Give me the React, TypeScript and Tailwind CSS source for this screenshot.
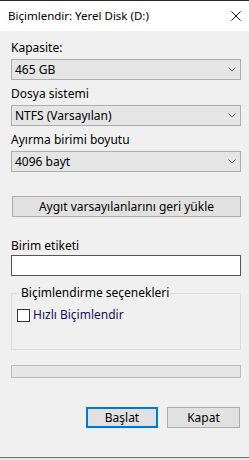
import { ReactNode } from 'react';

const font = { fontFamily: '"Noto Sans", "Segoe UI", sans-serif' };

function Chevron() {
  return (
    <svg width="8" height="5" viewBox="0 0 8 5" className="shrink-0">
      <path d="M0.5 0.5 L4 4 L7.5 0.5" fill="none" stroke="#5f5f5f" strokeWidth="1" />
    </svg>
  );
}

function Field({ label, value }: { label: string; value: string }) {
  return (
    <div className="mt-[6px] first:mt-[9px]">
      <div className="h-4 leading-4 text-[12px] text-black">{label}</div>
      <div className="mt-[3px] h-[21px] border border-[#adadad] bg-[#e5e5e5] flex items-center justify-between pl-[3px] pr-[4px]">
        <span className="text-[12px] leading-4 text-black">{value}</span>
        <Chevron />
      </div>
    </div>
  );
}

function Button({ children, primary, className }: { children: ReactNode; primary?: boolean; className?: string }) {
  return (
    <div
      className={
        'h-[21px] flex items-center justify-center text-[12px] text-black bg-[#e1e1e1] ' +
        (primary ? 'border-2 border-[#0078d7] ' : 'border border-[#adadad] ') +
        (className ?? '')
      }
    >
      {children}
    </div>
  );
}

export default function App() {
  return (
    <div className="w-[249px] h-[460px] overflow-hidden flex flex-col bg-[#f0f0f0]" style={font}>
      <div className="h-px bg-[#2b2b2b]" />
      <div className="h-[30px] bg-white flex items-center justify-between pl-[8px] pr-[8px]">
        <span className="text-[11.5px] text-black">Biçimlendir: Yerel Disk (D:)</span>
        <svg width="10" height="10" viewBox="0 0 10 10">
          <path d="M0.5 0.5 L9.5 9.5 M9.5 0.5 L0.5 9.5" stroke="#111" strokeWidth="1" />
        </svg>
      </div>

      <div className="flex-1 flex flex-col px-[11px] pr-[8px]">
        <Field label="Kapasite:" value="465 GB" />
        <Field label="Dosya sistemi" value="NTFS (Varsayılan)" />
        <Field label="Ayırma birimi boyutu" value="4096 bayt" />

        <Button className="mt-[24px] ml-px">Aygıt varsayılanlarını geri yükle</Button>

        <div className="mt-[21px] h-4 leading-4 text-[12px] text-black">Birim etiketi</div>
        <div className="mt-px h-[21px] border border-[#555] bg-white" />

        <div className="relative mt-[17px] h-[57px] border border-[#dcdcdc]">
          <span className="absolute -top-[9px] left-[7px] px-[2px] bg-[#f0f0f0] text-[12px] leading-4 text-black">
            Biçimlendirme seçenekleri
          </span>
          <div className="mt-[13px] ml-[5px] flex items-center gap-[3px]">
            <div className="w-[13px] h-[13px] border border-[#333] bg-white" />
            <span className="text-[12px] leading-4 text-[#101060]">Hızlı Biçimlendir</span>
          </div>
        </div>

        <div className="mt-[15px] h-[13px] border border-[#bcbcbc] bg-[#e6e6e6]" />

        <div className="mt-[29px] flex justify-end gap-[9px] pr-px">
          <Button primary className="w-[72px]">Başlat</Button>
          <Button className="w-[73px]">Kapat</Button>
        </div>
      </div>

      <div className="h-px bg-[#6e6e6e]" />
      <div className="h-[2px] bg-[#e8e8e8]" />
    </div>
  );
}
